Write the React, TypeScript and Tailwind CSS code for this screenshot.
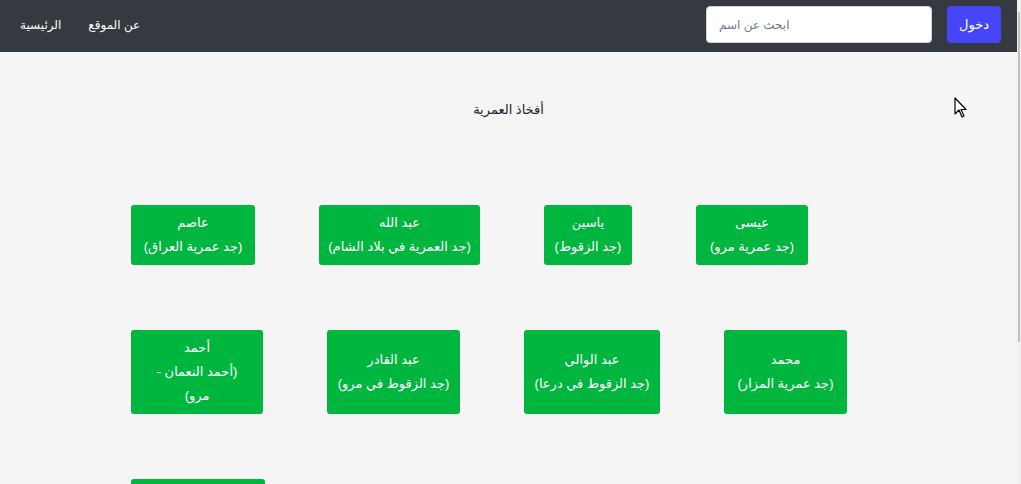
import React from 'react';

type Card = { name: string; desc: string; w: string; descW?: string };

const generations: Card[][] = [
    [
        { name: 'عاصم', desc: '(جد عمرية العراق)', w: 'w-[124px]' },
        { name: 'عبد الله', desc: '(جد العمرية في بلاد الشام)', w: 'w-[161px]' },
        { name: 'ياسين', desc: '(جد الزقوط)', w: 'w-[88px]' },
        { name: 'عيسى', desc: '(جد عمرية مرو)', w: 'w-[112px]' },
    ],
    [
        { name: 'أحمد', desc: '(أحمد النعمان - مرو)', w: 'w-[132px]', descW: 'max-w-[92px]' },
        { name: 'عبد القادر', desc: '(جد الزقوط في مرو)', w: 'w-[133px]' },
        { name: 'عبد الوالي', desc: '(جد الزقوط في درعا)', w: 'w-[136px]' },
        { name: 'محمد', desc: '(جد عمرية المزار)', w: 'w-[123px]' },
    ],
    [
        { name: 'حسن', desc: '(جد عمرية حلب)', w: 'w-[134px]' },
    ],
];

const Cursor = () => (
    <svg width="13" height="21" viewBox="0 0 13 21" className="absolute left-[954px] top-[97px]">
        <path d="M1 1 L1 17 L5 13 L8 20 L10 19 L7 12.5 L12 12.5 Z" fill="#fff" stroke="#000" strokeWidth="1.2" strokeLinejoin="round" />
    </svg>
);

const FamilyCard: React.FC<{ card: Card }> = ({ card }) => (
    <div dir="rtl" className={`${card.w} flex shrink-0 flex-col items-center justify-center rounded-[3px] bg-[#00b63e] px-2 py-[6px] text-center text-[13px] leading-6 text-white`}>
        <div>{card.name}</div>
        <div className={card.descW ?? ''}>{card.desc}</div>
    </div>
);

export default function App() {
    return (
        <div className="flex h-[484px] w-[1021px] overflow-hidden bg-[#f5f5f5]" style={{ fontFamily: '"Liberation Sans", "DejaVu Sans", Arial, sans-serif' }}>
            <div className="relative flex w-[1017px] shrink-0 flex-col">
                {/* navbar */}
                <nav className="flex h-[52px] shrink-0 items-start justify-between bg-[#343a40] pl-5 pr-4 pt-[6px]">
                    <div className="flex h-[37px] items-center gap-[27px] text-[12px] text-white">
                        <a href="#">الرئيسية</a>
                        <a href="#">عن الموقع</a>
                    </div>
                    <div className="flex items-center gap-[15px]">
                        <input
                            type="text"
                            placeholder="ابحث عن اسم"
                            className="h-[37px] w-[226px] rounded-[4px] border border-[#ced4da] bg-white pl-3 text-[12px] outline-none placeholder:text-[#6c7a8d]"
                        />
                        <button className="flex h-[37px] w-[54px] items-center justify-center rounded-[4px] bg-[#4646f8] text-[13px] text-white">
                            دخول
                        </button>
                    </div>
                </nav>

                {/* content */}
                <div className="flex shrink-0 flex-col">
                    <h1 dir="rtl" className="pt-[48px] text-center text-[13px] leading-5 text-[#212529]">أفخاذ العمرية</h1>
                    <div className="mt-[85px] flex flex-col gap-[65px] pl-[131px]">
                        {generations.map((row, i) => (
                            <div key={i} className="flex shrink-0 items-stretch gap-16">
                                {row.map((c) => (
                                    <FamilyCard key={c.name} card={c} />
                                ))}
                            </div>
                        ))}
                    </div>
                </div>
                <Cursor />
            </div>
            {/* scrollbar */}
            <div className="flex w-[4px] shrink-0 justify-center bg-[#f1f1f1] pt-[12px]">
                <div className="h-[330px] w-[2px] bg-[#c1c1c1]" />
            </div>
        </div>
    );
}
